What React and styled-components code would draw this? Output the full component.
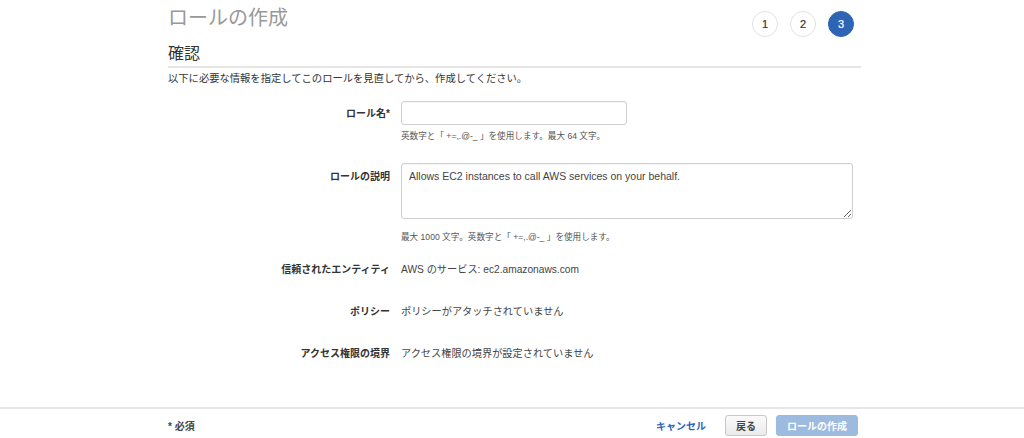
import React from 'react'
import styled, { createGlobalStyle } from 'styled-components';

const GlobalStyle = createGlobalStyle`
    html, body {
        margin: 0;
        padding: 0;
        background: #fff;
    }
    body {
        font-family: "Liberation Sans", "Noto Sans CJK JP", sans-serif;
        color: #444;
    }
`;

const steps = [1, 2, 3];

const rows = [
    { label: '信頼されたエンティティ', value: 'AWS のサービス: ec2.amazonaws.com' },
    { label: 'ポリシー', value: 'ポリシーがアタッチされていません' },
    { label: 'アクセス権限の境界', value: 'アクセス権限の境界が設定されていません' },
];

const App = () => {
    return (
        <Page>
            <GlobalStyle />
            <Main>
                <Header>
                    <Title>ロールの作成</Title>
                    <Steps>
                        {steps.map((s) => (
                            <Step key={s} $active={s === 3}>{s}</Step>
                        ))}
                    </Steps>
                </Header>
                <SectionTitle>確認</SectionTitle>
                <Intro>以下に必要な情報を指定してこのロールを見直してから、作成してください。</Intro>

                <Form>
                    <FieldRow $top={15}>
                        <Label $pad={5}>ロール名*</Label>
                        <Field>
                            <TextInput type="text" />
                            <Help $gap={5}>英数字と「 +=,.@-_ 」を使用します。最大 64 文字。</Help>
                        </Field>
                    </FieldRow>

                    <FieldRow $top={21}>
                        <Label $pad={6}>ロールの説明</Label>
                        <Field>
                            <TextArea defaultValue="Allows EC2 instances to call AWS services on your behalf." />
                            <Help $gap={12}>最大 1000 文字。英数字と「 +=,.@-_ 」を使用します。</Help>
                        </Field>
                    </FieldRow>

                    <Summary>
                        {rows.map((r) => (
                            <SummaryRow key={r.label}>
                                <Label $pad={4}>{r.label}</Label>
                                <Value>{r.value}</Value>
                            </SummaryRow>
                        ))}
                    </Summary>
                </Form>
            </Main>

            <Footer>
                <FooterInner>
                    <Required>* 必須</Required>
                    <Actions>
                        <CancelLink href="#">キャンセル</CancelLink>
                        <BackButton>戻る</BackButton>
                        <CreateButton disabled>ロールの作成</CreateButton>
                    </Actions>
                </FooterInner>
            </Footer>
        </Page>
    )
}

const Page = styled.div`
    height: 100vh;
    display: flex;
    flex-direction: column;
    overflow: hidden;
`;

const Main = styled.main`
    flex: 1;
    padding: 0 163px 0 168px;
`;

const Header = styled.div`
    display: flex;
    justify-content: space-between;
    align-items: flex-start;
    height: 43px;
`;

const Title = styled.h1`
    margin: 6px 0 0;
    font-size: 20px;
    line-height: 24px;
    font-weight: 400;
    color: #999;
`;

const Steps = styled.div`
    display: flex;
    gap: 12px;
    padding-top: 11px;
    margin-right: 7px;
`;

const Step = styled.div`
    width: 26px;
    height: 26px;
    box-sizing: border-box;
    border-radius: 50%;
    border: 1px solid ${(p) => (p.$active ? '#2d64b3' : '#e2e2e2')};
    background: ${(p) => (p.$active ? '#2d64b3' : '#fff')};
    color: ${(p) => (p.$active ? '#fff' : '#333')};
    display: flex;
    align-items: center;
    justify-content: center;
    font-size: 11px;
    font-weight: 400;
    -webkit-text-stroke: 0.2px currentColor;
`;

const SectionTitle = styled.h2`
    margin: 0;
    font-size: 16px;
    line-height: 22px;
    font-weight: 400;
    color: #333;
    padding-bottom: 1px;
    border-bottom: 2px solid #e6e6e6;
`;

const Intro = styled.p`
    margin: 4px 0 0;
    font-size: 10.3px;
    line-height: 14px;
    color: #333;
`;

const Form = styled.div`
    display: flex;
    flex-direction: column;
`;

const FieldRow = styled.div`
    display: grid;
    grid-template-columns: 222px 1fr;
    column-gap: 11px;
    margin-top: ${(p) => p.$top}px;
`;

const Label = styled.div`
    text-align: right;
    font-size: 10px;
    font-weight: 700;
    color: #333;
    line-height: 16px;
    padding-top: ${(p) => p.$pad || 0}px;
`;

const Field = styled.div`
    display: flex;
    flex-direction: column;
    align-items: flex-start;
`;

const inputBase = `
    box-sizing: border-box;
    border: 1px solid #cfcfcf;
    border-radius: 3px;
    box-shadow: inset 0 1px 1px rgba(0, 0, 0, 0.04);
    font-family: "Liberation Sans", "Noto Sans CJK JP", sans-serif;
    font-size: 10.5px;
    color: #444;
    outline: none;
    background: #fff;
`;

const TextInput = styled.input`
    ${inputBase}
    width: 226px;
    height: 24px;
    padding: 0 7px;
`;

const TextArea = styled.textarea`
    ${inputBase}
    width: 452px;
    height: 56px;
    padding: 5px 7px;
    line-height: 14px;
    resize: vertical;
    display: block;
`;

const Help = styled.div`
    margin-top: ${(p) => p.$gap}px;
    font-size: 8.6px;
    line-height: 12px;
    color: #555;
`;

const Summary = styled.div`
    display: flex;
    flex-direction: column;
    margin-top: 15px;
`;

const SummaryRow = styled.div`
    display: grid;
    grid-template-columns: 222px 1fr;
    column-gap: 11px;
    height: 42px;
`;

const Value = styled.div`
    font-size: 10.2px;
    line-height: 16px;
    padding-top: 4px;
    color: #444;
`;

const Footer = styled.footer`
    height: 31px;
    flex-shrink: 0;
    border-top: 2px solid #e6e6e6;
    box-sizing: border-box;
`;

const FooterInner = styled.div`
    display: flex;
    justify-content: space-between;
    align-items: center;
    padding: 6px 166px 0 168px;
`;

const Required = styled.div`
    font-size: 10px;
    font-weight: 700;
    color: #444;
`;

const Actions = styled.div`
    display: flex;
    align-items: center;
`;

const CancelLink = styled.a`
    font-size: 10px;
    font-weight: 700;
    color: #2d64b3;
    text-decoration: none;
    margin-right: 19px;
`;

const buttonBase = `
    box-sizing: border-box;
    height: 21px;
    border-radius: 3px;
    font-family: "Liberation Sans", "Noto Sans CJK JP", sans-serif;
    font-size: 10px;
    font-weight: 700;
    padding: 0 10px;
    display: flex;
    align-items: center;
    justify-content: center;
`;

const BackButton = styled.button`
    ${buttonBase}
    width: 42px;
    border: 1px solid #c8c8c8;
    background: linear-gradient(#fafafa, #ebebeb);
    color: #444;
    margin-right: 9px;
`;

const CreateButton = styled.button`
    ${buttonBase}
    width: 82px;
    border: 1px solid #9dbadf;
    background: #9dbadf;
    color: #fff;
`;

export default App
